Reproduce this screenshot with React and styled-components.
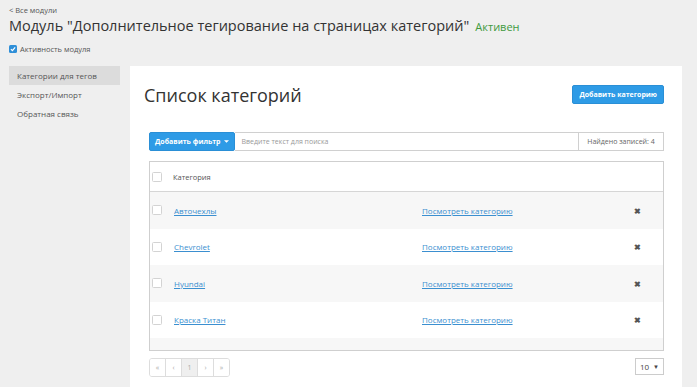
import React from 'react';
import styled, { createGlobalStyle } from 'styled-components';

const GlobalStyle = createGlobalStyle`
	html, body {
		margin: 0;
		padding: 0;
		background: #efefef;
		font-family: "Open Sans", "Liberation Sans", sans-serif;
		color: #333;
		overflow: hidden;
	}
`;

const Page = styled.div`
	padding: 5px 15px 0 9px;
	height: 387px;
	box-sizing: border-box;
`;

const BackLink = styled.a`
	display: block;
	font-size: 7.5px;
	color: #555;
	text-decoration: none;
	line-height: 10px;
`;

const TitleRow = styled.div`
	display: flex;
	align-items: baseline;
	gap: 6px;
	margin-top: 1px;
`;

const Title = styled.h1`
	margin: 0;
	font-size: 14.5px;
	font-weight: 400;
	line-height: 20px;
	color: #333;
`;

const Status = styled.span`
	font-size: 11px;
	color: #3e9a3e;
`;

const ActiveRow = styled.label`
	display: flex;
	align-items: center;
	gap: 3px;
	margin-top: 8px;
	font-size: 7.5px;
	color: #555;
`;

const BlueCheck = styled.span`
	width: 8px;
	height: 8px;
	border-radius: 1.5px;
	background: #2f8fd8;
	display: flex;
	align-items: center;
	justify-content: center;
`;

const Body = styled.div`
	display: flex;
	gap: 10px;
	margin-top: 12px;
	align-items: flex-start;
`;

const Sidebar = styled.nav`
	width: 111px;
	display: flex;
	flex-direction: column;
`;

const SideItem = styled.div`
	height: 19px;
	line-height: 19px;
	padding-left: 8px;
	font-size: 8px;
	color: #555;
	background: ${p => (p.$active ? '#dcdcdc' : 'transparent')};
`;

const Panel = styled.main`
	flex: 1;
	background: #fff;
	padding: 0 18px 0 19px;
	height: 330px;
`;

const PanelHead = styled.div`
	display: flex;
	justify-content: space-between;
	align-items: center;
	height: 57px;
`;

const PanelTitle = styled.h2`
	margin: 0 0 0 -5px;
	font-size: 18px;
	font-weight: 400;
	color: #333;
`;

const BlueButton = styled.button`
	background: #2e9be6;
	color: #fff;
	border: 1px solid #2a8fd6;
	border-radius: 2px;
	font-family: inherit;
	font-weight: 700;
	font-size: 7px;
	height: 19px;
	padding: 0 ${p => p.$px || 8}px;
	display: flex;
	align-items: center;
	gap: 3px;
	white-space: nowrap;
`;

const FilterBar = styled.div`
	display: flex;
	height: 19px;
	margin-top: 9px;
`;

const SearchInput = styled.div`
	flex: 1;
	border: 1px solid #d0d0d0;
	border-left: none;
	font-size: 7px;
	color: #999;
	padding-left: 7px;
	display: flex;
	align-items: center;
`;

const Counter = styled.div`
	width: 86px;
	box-sizing: border-box;
	border: 1px solid #d0d0d0;
	font-size: 7px;
	color: #666;
	display: flex;
	align-items: center;
	justify-content: center;
	margin-left: -1px;
`;

const Table = styled.div`
	margin-top: 10px;
	border: 1px solid #cfcfcf;
`;

const Row = styled.div`
	display: grid;
	grid-template-columns: 22px 250px 1fr 60px;
	align-items: center;
	height: ${p => (p.$head ? 29 : 36.5)}px;
	background: ${p => (p.$shade ? '#f7f7f7' : '#fff')};
	border-bottom: ${p => (p.$head ? '1px solid #d6d6d6' : 'none')};
	font-size: 8px;
`;

const Check = styled.span`
	width: 8px;
	height: 8px;
	border: 1px solid #d3d3d3;
	border-radius: 1.5px;
	background: #fff;
	margin-left: 2px;
`;

const HeadLabel = styled.span`
	color: #555;
	font-size: 7.5px;
	padding-left: 1px;
`;

const Link = styled.a`
	color: #3b8fd0;
	text-decoration: underline;
	padding-left: ${p => p.$pl || 0}px;
`;

const Remove = styled.span`
	justify-self: center;
	color: #555;
	font-size: 8px;
	font-weight: 700;
	margin-left: 8px;
`;

const FootBand = styled.div`
	height: 12px;
	background: #f7f7f7;
	border: 1px solid #cfcfcf;
	border-top: none;
	margin-top: -1px;
`;

const Footer = styled.div`
	display: flex;
	justify-content: space-between;
	margin-top: 7px;
`;

const Pager = styled.div`
	display: flex;
	border: 1px solid #ddd;
	border-radius: 3px;
	overflow: hidden;
	height: 17px;
`;

const PageCell = styled.span`
	width: 15px;
	display: flex;
	align-items: center;
	justify-content: center;
	font-size: 7px;
	color: #aaa;
	background: ${p => (p.$active ? '#efefef' : '#fff')};
	& + & {
		border-left: 1px solid #ddd;
	}
`;

const SizeSelect = styled.div`
	height: 17px;
	width: 29px;
	border: 1px solid #ccc;
	display: flex;
	align-items: center;
	justify-content: space-between;
	padding: 0 4px;
	box-sizing: border-box;
	font-size: 8px;
	color: #444;
	& span {
		font-size: 6px;
	}
`;

const categories = ['Авточехлы', 'Chevrolet', 'Hyundai', 'Краска Титан'];

const App = () => (
	<Page>
		<GlobalStyle />
		<BackLink>&lt; Все модули</BackLink>
		<TitleRow>
			<Title>Модуль "Дополнительное тегирование на страницах категорий"</Title>
			<Status>Активен</Status>
		</TitleRow>
		<ActiveRow>
			<BlueCheck>
				<svg width="6" height="6" viewBox="0 0 10 10">
					<path d="M1.5 5.2 L4 7.6 L8.6 2.4" stroke="#fff" strokeWidth="2" fill="none" />
				</svg>
			</BlueCheck>
			Активность модуля
		</ActiveRow>
		<Body>
			<Sidebar>
				<SideItem $active>Категории для тегов</SideItem>
				<SideItem>Экспорт/Импорт</SideItem>
				<SideItem>Обратная связь</SideItem>
			</Sidebar>
			<Panel>
				<PanelHead>
					<PanelTitle>Список категорий</PanelTitle>
					<BlueButton $px={6}>Добавить категорию</BlueButton>
				</PanelHead>
				<FilterBar>
					<BlueButton $px={5}>
						Добавить фильтр
						<svg width="5" height="3" viewBox="0 0 6 3">
							<path d="M0 0 H6 L3 3 Z" fill="#fff" />
						</svg>
					</BlueButton>
					<SearchInput>Введите текст для поиска</SearchInput>
					<Counter>Найдено записей: 4</Counter>
				</FilterBar>
				<Table>
					<Row $head>
						<Check />
						<HeadLabel>Категория</HeadLabel>
					</Row>
					{categories.map((name, i) => (
						<Row key={name} $shade={i % 2 === 0}>
							<Check />
							<Link $pl={2}>{name}</Link>
							<Link>Посмотреть категорию</Link>
							<Remove>✖</Remove>
						</Row>
					))}
				</Table>
				<FootBand />
				<Footer>
					<Pager>
						<PageCell>«</PageCell>
						<PageCell>‹</PageCell>
						<PageCell $active>1</PageCell>
						<PageCell>›</PageCell>
						<PageCell>»</PageCell>
					</Pager>
					<SizeSelect>
						10<span>▼</span>
					</SizeSelect>
				</Footer>
			</Panel>
		</Body>
	</Page>
);

export default App;
